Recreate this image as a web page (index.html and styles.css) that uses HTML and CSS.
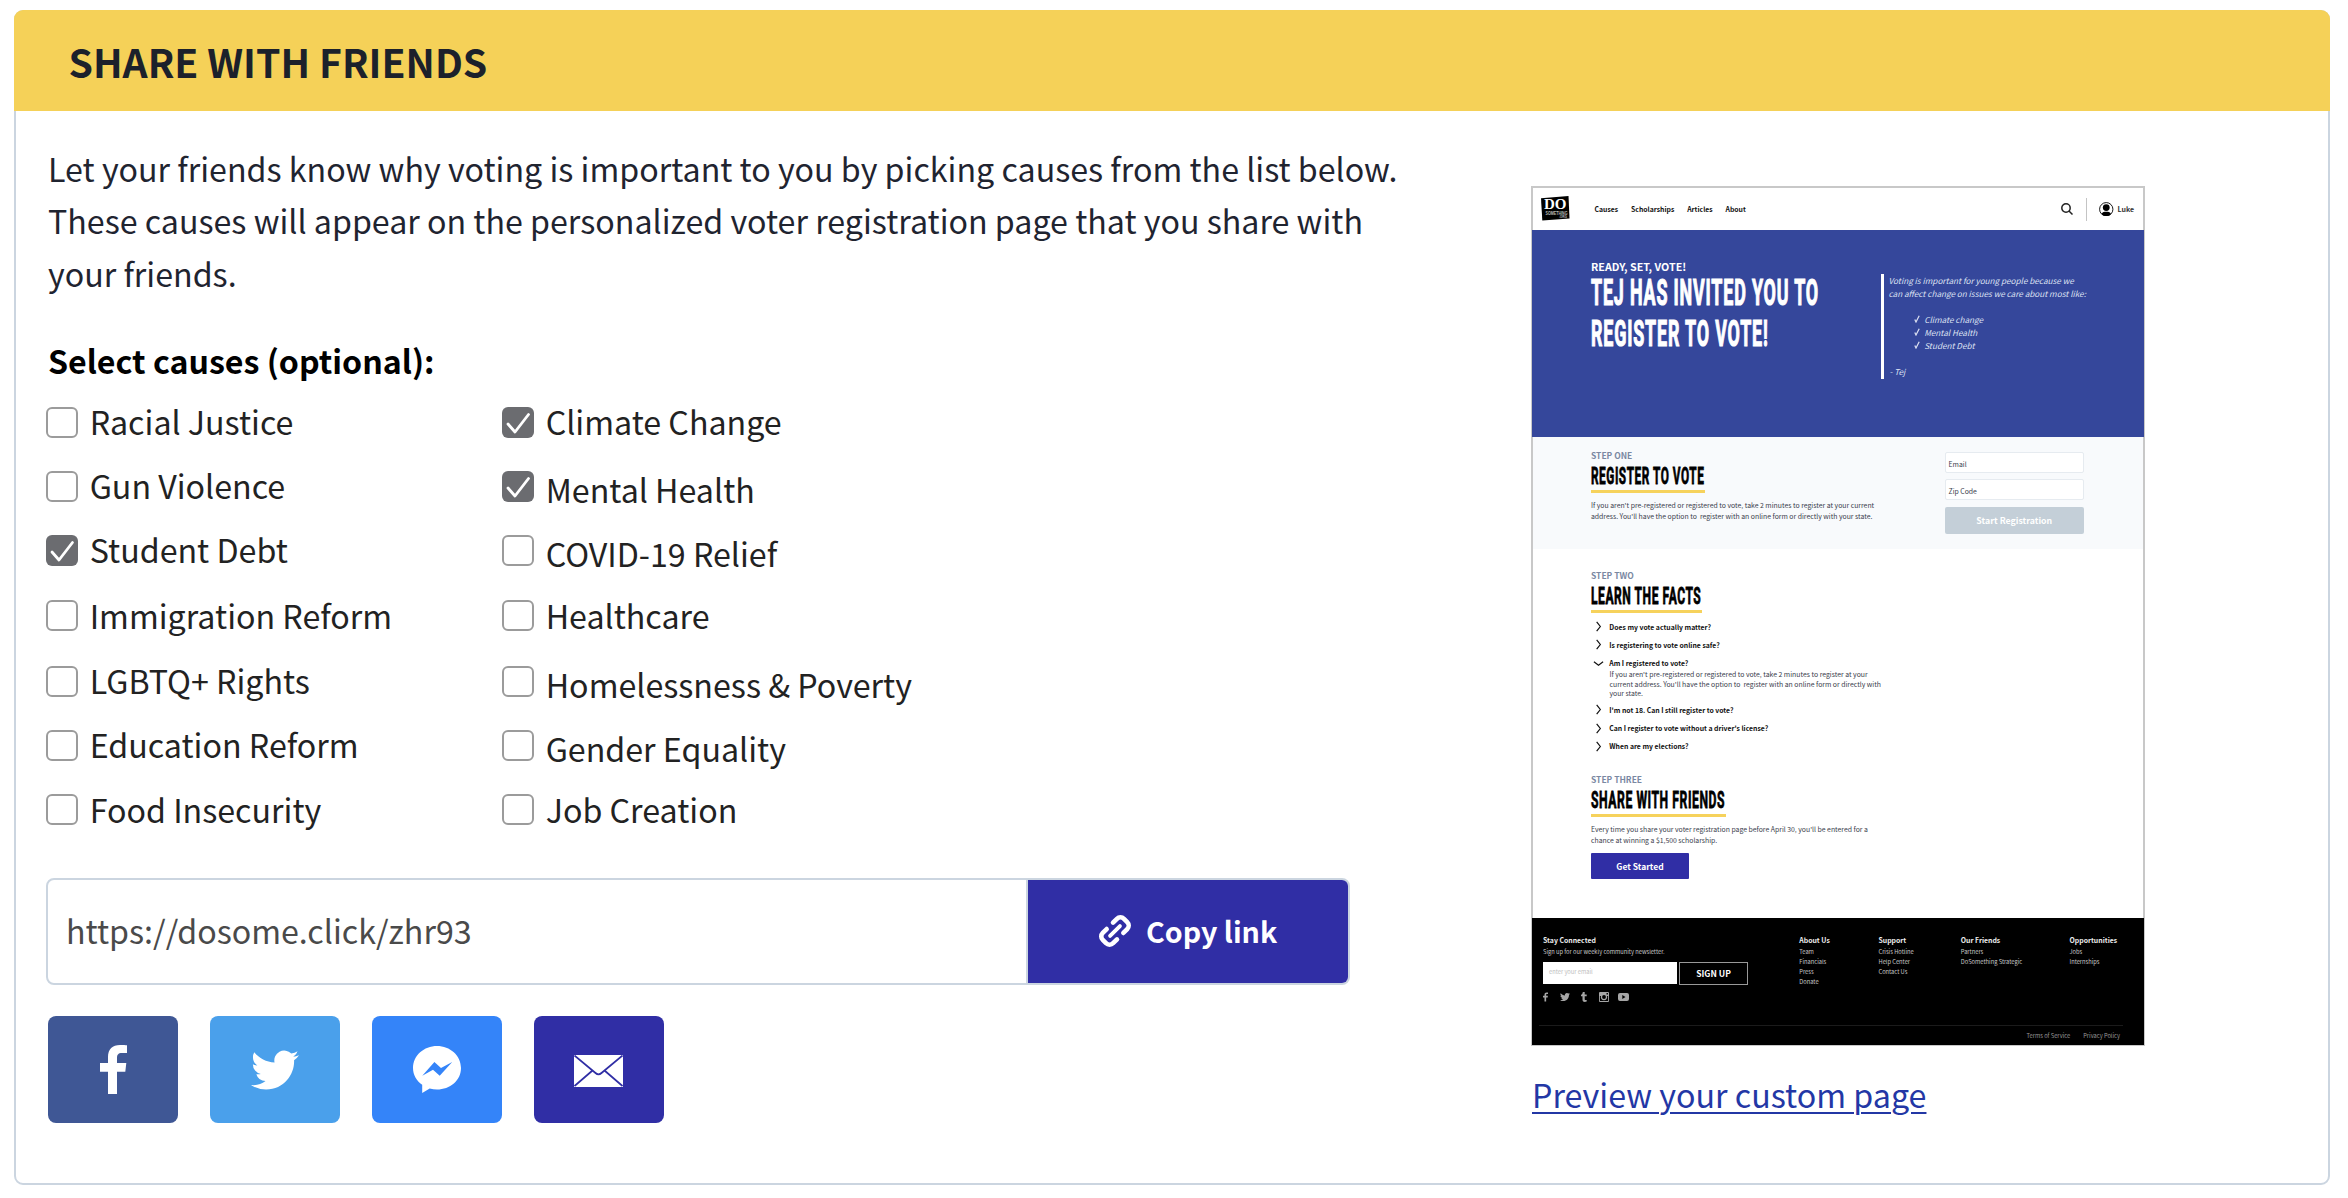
FILE: index.html
```html
<!DOCTYPE html>
<html lang="en">
<head>
<meta charset="utf-8">
<title>Share with friends</title>
<link rel="stylesheet" href="styles.css">
</head>
<body>
<section class="card">
  <h1 class="card-header">SHARE WITH FRIENDS</h1>
  <div class="card-body">
    <div class="share">
      <p class="intro">Let your friends know why voting is important to you by picking causes from the list below.<br>These causes will appear on the personalized voter registration page that you share with<br>your friends.</p>
      <h2 class="causes-title">Select causes (optional):</h2>
      <div class="causes">
        <label class="cause"><span class="box"></span><span class="label">Racial Justice</span></label>
        <label class="cause"><span class="box"></span><span class="label">Gun Violence</span></label>
        <label class="cause"><span class="box checked"><svg viewBox="0 0 32 31"><path d="M6 17l7 8L26.500 7.500"/></svg></span><span class="label">Student Debt</span></label>
        <label class="cause low"><span class="box"></span><span class="label">Immigration Reform</span></label>
        <label class="cause"><span class="box"></span><span class="label">LGBTQ+ Rights</span></label>
        <label class="cause"><span class="box"></span><span class="label">Education Reform</span></label>
        <label class="cause low"><span class="box"></span><span class="label">Food Insecurity</span></label>
        <label class="cause"><span class="box checked"><svg viewBox="0 0 32 31"><path d="M6 17l7 8L26.500 7.500"/></svg></span><span class="label">Climate Change</span></label>
        <label class="cause lower"><span class="box checked"><svg viewBox="0 0 32 31"><path d="M6 17l7 8L26.500 7.500"/></svg></span><span class="label">Mental Health</span></label>
        <label class="cause lower"><span class="box"></span><span class="label">COVID-19 Relief</span></label>
        <label class="cause low"><span class="box"></span><span class="label">Healthcare</span></label>
        <label class="cause lower"><span class="box"></span><span class="label">Homelessness &amp; Poverty</span></label>
        <label class="cause lower"><span class="box"></span><span class="label">Gender Equality</span></label>
        <label class="cause low"><span class="box"></span><span class="label">Job Creation</span></label>
      </div>
      <div class="link-row">
        <div class="link-url">https://dosome.click/zhr93</div>
        <div class="copy">
          <svg class="copy-icon" viewBox="-18 -18 36 36"><g transform="rotate(-45)"><path d="M4.500-7.300H10a5 5 0 0 1 5 5V2.300a5 5 0 0 1-5 5H4.500"/><path d="M-4.500-7.300H-10a5 5 0 0 0-5 5V2.300a5 5 0 0 0 5 5H-4.500"/><path d="M-7 0H7" class="bar"/></g></svg>
          <span>Copy link</span>
        </div>
      </div>
      <div class="social">
        <div class="social-btn facebook"><svg width="27" height="49" viewBox="0 0 27 49"><path d="M27 .3V8h-5c-4 0-5 2-5 5v5h9.300l-1 8.700H17V49H8V26.700H0V18h8v-6C8 4 12.500 0 20 0c3.500 0 5.500.1 7 .3z"/></svg></div>
        <div class="social-btn twitter"><svg width="48" height="48" viewBox="0 0 24 24"><path d="M23.953 4.570a10 10 0 01-2.825.775 4.958 4.958 0 002.163-2.723c-.951.555-2.005.959-3.127 1.184a4.920 4.920 0 00-8.384 4.482C7.690 8.095 4.067 6.130 1.640 3.162a4.822 4.822 0 00-.666 2.475c0 1.710.870 3.213 2.188 4.096a4.904 4.904 0 01-2.228-.616v.060a4.923 4.923 0 003.946 4.827 4.996 4.996 0 01-2.212.085 4.936 4.936 0 004.604 3.417 9.867 9.867 0 01-6.102 2.105c-.390 0-.779-.023-1.170-.067a13.995 13.995 0 007.557 2.209c9.053 0 13.998-7.496 13.998-13.985 0-.210 0-.420-.015-.630A9.935 9.935 0 0024 4.590z"/></svg></div>
        <div class="social-btn messenger"><svg width="48" height="47" viewBox="0 0 48 47"><path fill-rule="evenodd" d="M24 0C37 0 48 9.500 48 22S37 43.500 24 43.500c-2.500 0-5-.3-7.300-1L9.200 47v-8.300C3.500 34.800 0 29 0 22 0 9.500 11 0 24 0zM9.300 29.700 20 23.700l6.700 6L39.200 16 28 22l-6.600-6z"/></svg></div>
        <div class="social-btn email"><svg width="49" height="32" viewBox="0 0 49 32"><path d="M0 0h49v32H0z"/><g class="fold"><path d="M.5.500 21.500 18q3 2.600 6 0L48.500.500"/><path d="M.5 31 18.500 15.500M48.500 31l-18-15.500"/></g></svg></div>
      </div>
    </div>

    <aside class="side">
      <div class="preview">
        <div class="pv-nav">
          <svg class="pv-logo" viewBox="0 0 31 25"><path d="M0 2.300 27.500 0l1 22.500L1.300 24.600z"/><text x="3" y="13.300" textLength="22.500" lengthAdjust="spacingAndGlyphs" class="logo-do">DO</text><text x="4.500" y="18.600" textLength="22" lengthAdjust="spacingAndGlyphs" class="logo-sm">SOMETHING</text><text x="18" y="22.300" textLength="8" lengthAdjust="spacingAndGlyphs" class="logo-org">.ORG</text></svg>
          <span class="pv-links"><span>Causes</span><span>Scholarships</span><span>Articles</span><span>About</span></span>
          <svg class="pv-search" viewBox="0 0 12 12"><circle cx="5" cy="5" r="4.200"/><path d="M8 8l3.500 3.500"/></svg>
          <span class="pv-divider"></span>
          <svg class="pv-avatar" viewBox="0 0 15 15"><circle cx="7.500" cy="7.500" r="6.900" class="ring"/><circle cx="7.500" cy="5.700" r="3.500"/><path d="M2.600 12.300c.9-2 3-2.200 4.900-2.200s4 .2 4.900 2.200c-2.600 3-7.200 3-9.800 0z"/></svg>
          <span class="pv-user">Luke</span>
        </div>
        <div class="pv-hero">
          <div class="pv-invite">
            <p class="pv-kicker">READY, SET, VOTE!</p>
            <p class="pv-headline">TEJ HAS INVITED YOU TO<br>REGISTER TO VOTE!</p>
          </div>
          <div class="pv-quote">
            <p>Voting is important for young people because we<br>can affect change on issues we care about most like:</p>
            <ul>
              <li><svg viewBox="0 0 6 8"><path d="M.8 4.500 2 7 5.200.8"/></svg>Climate change</li>
              <li><svg viewBox="0 0 6 8"><path d="M.8 4.500 2 7 5.200.8"/></svg>Mental Health</li>
              <li><svg viewBox="0 0 6 8"><path d="M.8 4.500 2 7 5.200.8"/></svg>Student Debt</li>
            </ul>
            <p class="pv-sign">- Tej</p>
          </div>
        </div>
        <div class="pv-register">
          <div>
            <p class="pv-step">STEP ONE</p>
            <h3 class="pv-title one"><span>REGISTER TO VOTE</span></h3>
            <p class="pv-text">If you aren't pre-registered or registered to vote, take 2 minutes to register at your current<br>address. You'll have the option to&nbsp; register with an online form or directly with your state.</p>
          </div>
          <div class="pv-form">
            <div class="pv-input">Email</div>
            <div class="pv-input">Zip Code</div>
            <div class="pv-start">Start Registration</div>
          </div>
        </div>
        <div class="pv-main">
          <p class="pv-step">STEP TWO</p>
          <h3 class="pv-title two"><span>LEARN THE FACTS</span></h3>
          <ul class="pv-faq">
            <li><svg viewBox="0 0 12 12"><path d="M4 1l4 5-4 5"/></svg>Does my vote actually matter?</li>
            <li><svg viewBox="0 0 12 12"><path d="M4 1l4 5-4 5"/></svg>Is registering to vote online safe?</li>
            <li><svg viewBox="0 0 12 12"><path d="M1 4l5 4 5-4"/></svg>Am I registered to vote?</li>
          </ul>
          <p class="pv-answer">If you aren't pre-registered or registered to vote, take 2 minutes to register at your<br>current address. You'll have the option to&nbsp; register with an online form or directly with<br>your state.</p>
          <ul class="pv-faq rest">
            <li><svg viewBox="0 0 12 12"><path d="M4 1l4 5-4 5"/></svg>I'm not 18. Can I still register to vote?</li>
            <li><svg viewBox="0 0 12 12"><path d="M4 1l4 5-4 5"/></svg>Can I register to vote without a driver's license?</li>
            <li><svg viewBox="0 0 12 12"><path d="M4 1l4 5-4 5"/></svg>When are my elections?</li>
          </ul>
          <p class="pv-step">STEP THREE</p>
          <h3 class="pv-title three"><span>SHARE WITH FRIENDS</span></h3>
          <p class="pv-text loose">Every time you share your voter registration page before April 30, you'll be entered for a<br>chance at winning a $1,500 scholarship.</p>
          <div class="pv-button">Get Started</div>
        </div>
        <div class="pv-footer">
          <div class="pv-cols">
            <div>
              <h4>Stay Connected</h4>
              <p class="pv-sub">Sign up for our weekly community newsletter.</p>
              <div class="pv-signup"><span class="pv-email">enter your email</span><span class="pv-go">SIGN UP</span></div>
              <div class="pv-icons">
                <svg width="5" height="10" viewBox="0 0 27 49"><path d="M27 .3V8h-5c-4 0-5 2-5 5v5h9.300l-1 8.700H17V49H8V26.700H0V18h8v-6C8 4 12.500 0 20 0c3.500 0 5.500.1 7 .3z"/></svg>
                <svg width="10" height="10" viewBox="0 0 24 24"><path d="M23.953 4.570a10 10 0 01-2.825.775 4.958 4.958 0 002.163-2.723c-.951.555-2.005.959-3.127 1.184a4.920 4.920 0 00-8.384 4.482C7.690 8.095 4.067 6.130 1.640 3.162a4.822 4.822 0 00-.666 2.475c0 1.710.870 3.213 2.188 4.096a4.904 4.904 0 01-2.228-.616v.060a4.923 4.923 0 003.946 4.827 4.996 4.996 0 01-2.212.085 4.936 4.936 0 004.604 3.417 9.867 9.867 0 01-6.102 2.105c-.390 0-.779-.023-1.170-.067a13.995 13.995 0 007.557 2.209c9.053 0 13.998-7.496 13.998-13.985 0-.210 0-.420-.015-.630A9.935 9.935 0 0024 4.590z"/></svg>
                <svg width="6" height="10" viewBox="0 0 6 10"><path d="M1.800 0h1.900v2.500h2v1.800h-2v2.900c0 .9.800 1.100 2 .7v1.700C3.600 10.300 1.500 10 1.500 7.800V4.300H0V2.800C1.200 2.400 1.600 1.500 1.800 0z"/></svg>
                <svg width="10" height="10" viewBox="0 0 10 10"><path fill-rule="evenodd" d="M1 0h8a1 1 0 0 1 1 1v8a1 1 0 0 1-1 1H1a1 1 0 0 1-1-1V1a1 1 0 0 1 1-1zm6.500 1v1.500H9V1zM.9 4v4.900h8.200V4H8a3.200 3.200 0 1 1-6 0zM5 3.100a1.900 1.900 0 1 0 0 3.800 1.900 1.900 0 0 0 0-3.800z"/></svg>
                <svg width="11" height="10" viewBox="0 0 11 10"><path fill-rule="evenodd" d="M2 1h7a2 2 0 0 1 2 2v4a2 2 0 0 1-2 2H2a2 2 0 0 1-2-2V3a2 2 0 0 1 2-2zm2.300 2v4l3.200-2z"/></svg>
              </div>
            </div>
            <div><h4>About Us</h4><p>Team<br>Financials<br>Press<br>Donate</p></div>
            <div><h4>Support</h4><p>Crisis Hotline<br>Help Center<br>Contact Us</p></div>
            <div><h4>Our Friends</h4><p>Partners<br>DoSomething Strategic</p></div>
            <div><h4>Opportunities</h4><p>Jobs<br>Internships</p></div>
          </div>
          <div class="pv-legal"><span>Terms of Service</span><span>Privacy Policy</span></div>
        </div>
      </div>
      <a class="preview-link">Preview your custom page</a>
    </aside>
  </div>
</section>
</body>
</html>
```
FILE: styles.css
```css
* { box-sizing: border-box; }
body {
  margin: 0;
  background: #fff;
  color: #1f2430;
  font-family: "Noto Sans CJK SC", "Noto Sans", sans-serif;
  font-size: 32.200px;
}
h1, h2, h3, h4, p, ul { margin: 0; padding: 0; list-style: none; }
svg { display: block; flex: none; }

.card {
  width: 2316px;
  height: 1175px;
  margin: 10px 0 0 14px;
  border: 2px solid #cbd5e0;
  border-radius: 9px;
}
.card-header {
  margin: -2px -2px 0;
  height: 101px;
  padding-left: 54.500px;
  border-radius: 9px 9px 0 0;
  background: #f5d158;
  color: #1c212b;
  font-size: 39.150px;
  font-weight: 700;
  line-height: 103px;
}
.card-body {
  display: grid;
  grid-template-columns: 1485px 614px;
  padding-left: 30px;
}

/* Share column */
.share { padding-top: 30.500px; }
.intro { padding-left: 2px; line-height: 52.500px; white-space: nowrap; }
.causes-title {
  margin-top: 37px;
  padding-left: 2px;
  color: #000;
  font-size: 32.150px;
  font-weight: 700;
  line-height: 48px;
}
.causes {
  display: grid;
  grid-auto-flow: column;
  grid-template-rows: 64px 64px 65px 66px 64px 64px 64px;
  grid-template-columns: 456px 456px;
  margin-top: 23px;
}
.cause { display: flex; gap: 11.700px; color: #222; line-height: 40px; white-space: nowrap; }
.label { margin-top: -6px; }
.low .label { margin-top: -5px; }
.lower .label { margin-top: -2px; }
.box {
  width: 32px;
  height: 31px;
  border: 2px solid #9b9b9b;
  border-radius: 6px;
  background: #fff;
}
.box.checked { border: 0; background: #6b6c70; }
.box path { fill: none; stroke: #fff; stroke-width: 2.800; stroke-linecap: round; stroke-linejoin: round; }

.link-row {
  display: flex;
  width: 1304px;
  height: 107px;
  margin-top: 20px;
  border: 2px solid #cbd5e0;
  border-radius: 8px;
  overflow: hidden;
}
.link-url {
  flex: 1;
  padding: 0 0 2px 18px;
  border-right: 2px solid #cbd5e0;
  color: #4a4a4a;
  line-height: 101px;
}
.copy {
  display: flex;
  align-items: center;
  gap: 13px;
  width: 320px;
  padding: 0 0 3px 69px;
  background: #302ea5;
  color: #fff;
  font-size: 28.650px;
  font-weight: 700;
}
.copy-icon { width: 36px; height: 36px; margin-top: 2px; }
.copy-icon path { fill: none; stroke: #fff; stroke-width: 4.600; stroke-linecap: round; }
.copy-icon .bar { stroke-width: 3.800; }

.social { display: flex; gap: 32px; margin: 31px 0 0 2px; }
.social-btn {
  display: flex;
  align-items: center;
  justify-content: center;
  width: 130px;
  height: 107px;
  border-radius: 8px;
  fill: #fff;
}
.facebook { background: #3f5795; }
.twitter { background: #4aa0eb; }
.messenger { background: #3484f9; }
.email { background: #302ea5; }
.email svg { margin: 3px 1px 0 0; }
.fold { fill: none; stroke: #302ea5; stroke-width: 1.700; }

/* Preview column */
.side { padding-top: 75px; }
.preview-link {
  display: block;
  margin: 24px 0 0 1px;
  color: #2337a5;
  font-size: 32.220px;
  line-height: 48px;
  text-decoration: underline;
  text-decoration-thickness: 2px;
  text-underline-offset: 3.500px;
  white-space: nowrap;
}
.preview {
  width: 614px;
  height: 860px;
  border: 2px solid #c8c8c8;
  color: #3a404c;
  font-size: 6.860px;
  white-space: nowrap;
}
.pv-nav {
  display: flex;
  align-items: center;
  height: 42px;
  padding: 0 9px 0 8px;
  color: #111;
  font-weight: 700;
}
.pv-logo { width: 31px; height: 25px; margin-top: -2px; overflow: visible; }
.pv-logo text { fill: #fff; font-family: "Liberation Serif", serif; font-weight: 700; }
.logo-do { font-size: 15px; }
.pv-logo .logo-sm, .pv-logo .logo-org { font-family: "Liberation Sans", sans-serif; font-size: 5.500px; fill: #bbb; }
.pv-logo .logo-org { font-size: 3.500px; }
.pv-links { display: flex; gap: 12.800px; margin-left: 22.500px; margin-right: auto; }
.pv-search { width: 12px; height: 12px; fill: none; stroke: #222; stroke-width: 1.500; }
.pv-divider { width: 1px; height: 23px; margin: 0 12.500px; background: #c4c4c4; }
.pv-avatar { width: 14.500px; height: 14.500px; }
.pv-avatar .ring { fill: #fff; stroke: #111; stroke-width: 1; }
.pv-user { margin-left: 3.500px; color: #333; font-size: 7px; }

.pv-hero {
  display: flex;
  height: 206.500px;
  margin: 0 -1px;
  padding: 29px 0 0 59px;
  background: #35479b;
  color: #fff;
}
.pv-invite { width: 290px; }
.pv-kicker { padding-top: 1px; font-size: 10.720px; font-weight: 700; line-height: 14px; }
.pv-headline {
  margin-top: -2.500px;
  font: 700 36.500px/41.300px Roboto, sans-serif;
  letter-spacing: 1.700px;
  transform: scaleX(0.490);
  transform-origin: left;
  -webkit-text-stroke: 1.200px #fff;
}
.pv-quote {
  height: 105px;
  margin-top: 14.500px;
  padding-left: 4.500px;
  border-left: 3px solid #fff;
  color: #dde1f2;
  font-size: 8.180px;
  font-style: italic;
  line-height: 13px;
}
.pv-quote ul { margin: 13px 0 13px 25px; }
.pv-quote li { display: flex; align-items: center; gap: 4.700px; }
.pv-quote li svg { width: 6px; height: 8px; fill: none; stroke: #dde1f2; stroke-width: 1.200; }
.pv-quote > p:first-child { padding-top: 0.500px; margin-bottom: -0.500px; }
.pv-sign { padding-left: 1px; }

.pv-register {
  display: flex;
  height: 112px;
  padding: 12.500px 0 0 58px;
  background: #f8fafc;
}
.pv-step { color: #7a88a2; font-size: 8.470px; font-weight: 700; line-height: 12px; }
.pv-title {
  height: 29px;
  margin-top: 3px;
  border-bottom: 3px solid #f6d25c;
  color: #000;
  font: 700 24px/24px Roboto, sans-serif;
}
.pv-title span {
  display: block;
  letter-spacing: 1.100px;
  transform: scaleX(0.502);
  transform-origin: left;
  -webkit-text-stroke: 0.800px #000;
}
.pv-title.one { width: 113.500px; }
.pv-title.one span { transform: scaleX(0.492); }
.pv-title.two { width: 110.500px; }
.pv-title.three { width: 134.500px; }
.pv-title.three span { transform: scaleX(0.507); }
.pv-text { margin-top: 7px; line-height: 10.900px; }
.pv-text.loose { line-height: 11.600px; }
.pv-form { width: 139.500px; margin: 3.200px 59px 0 auto; }
.pv-input {
  height: 21px;
  margin-bottom: 6.200px;
  padding-left: 3px;
  border: 1px solid #e6ebf0;
  border-radius: 2px;
  background: #fff;
  line-height: 22px;
}
.pv-start {
  height: 27px;
  border-radius: 2px;
  background: #c4cfd8;
  color: #fff;
  font-size: 8.760px;
  font-weight: 700;
  line-height: 27px;
  text-align: center;
}
.pv-main { height: 369.500px; padding: 20.500px 0 0 58px; }
.pv-main .pv-title { margin-top: 2.500px; }
.pv-faq { margin-top: 5.100px; color: #111; font-weight: 700; line-height: 18.250px; }
.pv-faq li { display: flex; align-items: center; gap: 5.300px; padding-left: 2px; }
.pv-faq svg { width: 11px; height: 11px; fill: none; stroke: #111; stroke-width: 1.300; }
.pv-answer { margin: -2.100px 0 0 18.500px; line-height: 9.600px; }
.pv-faq.rest { margin: 1.700px 0 17.700px; }
.pv-button {
  width: 98px;
  height: 26px;
  margin-top: 5.800px;
  border-radius: 1px;
  background: #302ea5;
  color: #fff;
  font-size: 8.510px;
  font-weight: 700;
  line-height: 26px;
  text-align: center;
}
.pv-footer {
  height: 127px;
  margin: 0 -1px;
  padding: 17px 0 0 7px;
  background: #000;
  color: #c9c9c9;
  font-size: 5.720px;
}
.pv-cols {
  display: grid;
  grid-template-columns: 256.300px 79.200px 82.300px 108.700px 1fr;
  height: 90px;
  padding-left: 4px;
  line-height: 9.900px;
}
.pv-cols h4 { margin-bottom: 1.900px; color: #eee; font-size: 6.900px; line-height: 10px; }
.pv-signup { display: flex; gap: 2.800px; margin-top: 5.100px; }
.pv-email { width: 133.500px; height: 22px; padding-left: 6px; background: #fff; color: #bdbdbd; line-height: 20px; }
.pv-go {
  width: 68.500px;
  border: 1px solid #999;
  color: #fff;
  font-size: 8.530px;
  font-weight: 700;
  line-height: 21px;
  text-align: center;
}
.pv-icons { display: flex; gap: 11.500px; margin-top: 7.500px; fill: #a5a5a5; }
.pv-icons svg:nth-child(5) { margin-left: -2px; }
.pv-legal {
  display: flex;
  justify-content: flex-end;
  gap: 13px;
  width: 584px;
  padding: 5px 3px 0 0;
  border-top: 1px solid #1b1b1b;
  color: #999;
  line-height: 10px;
}
```
